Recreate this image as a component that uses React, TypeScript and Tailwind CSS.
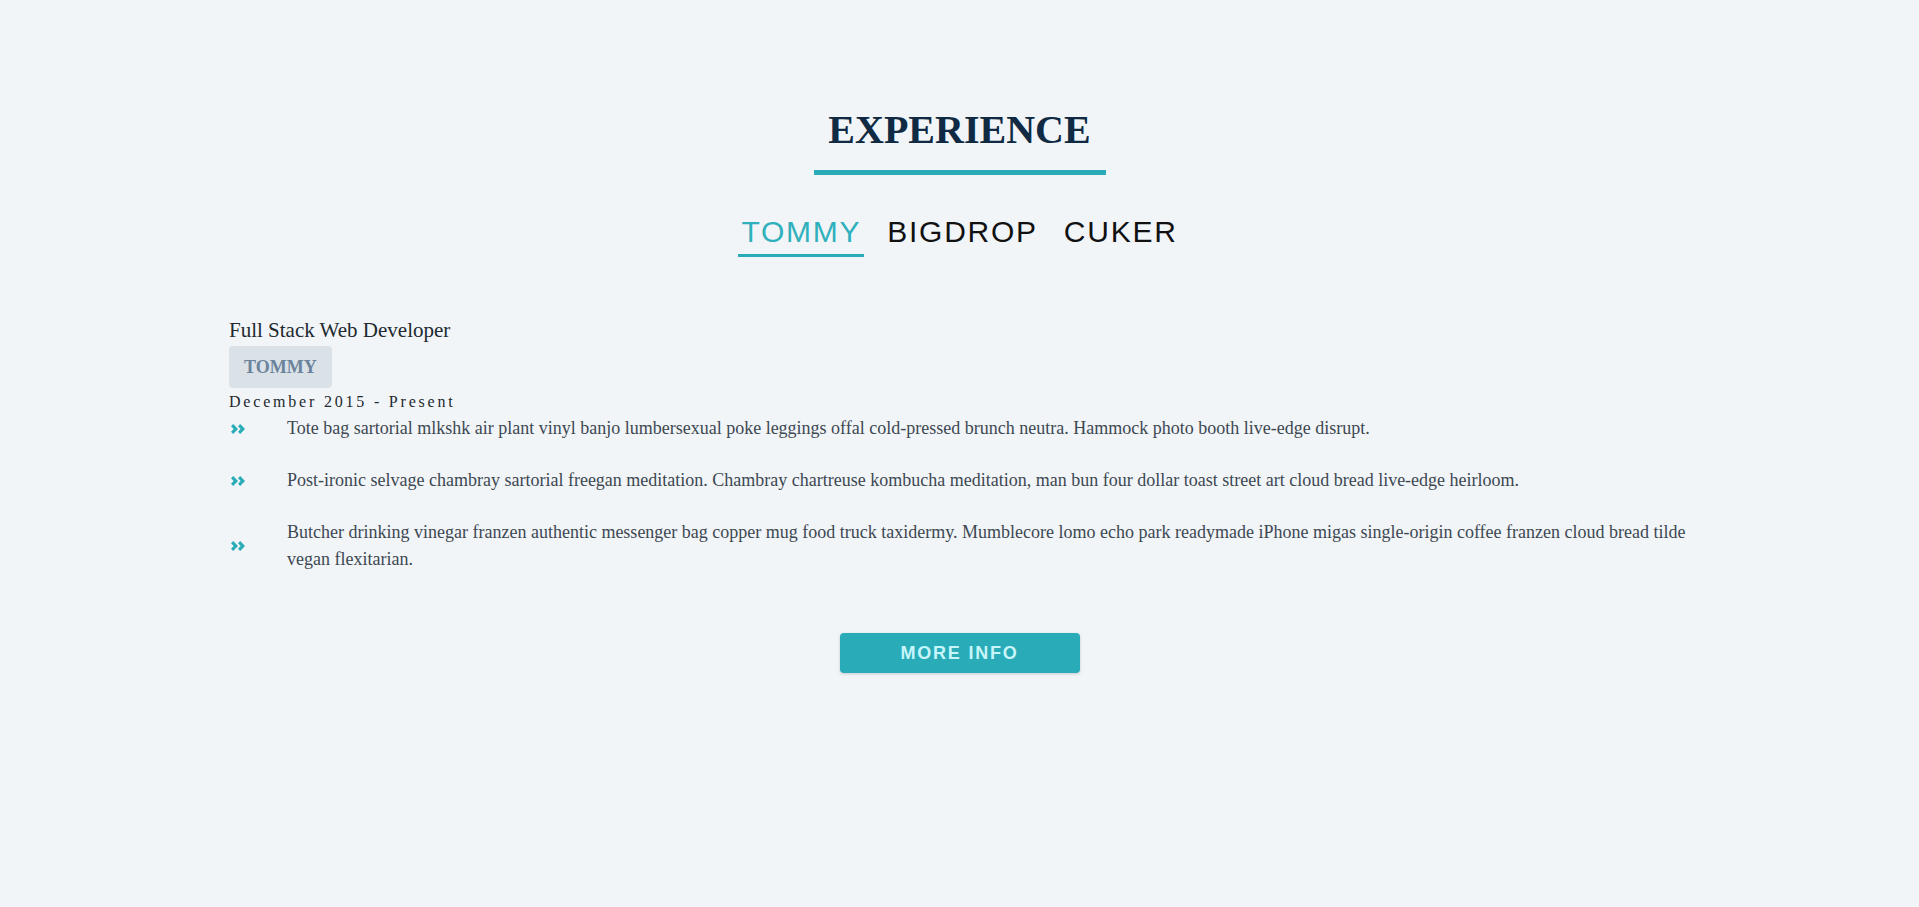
import React from 'react';

type Job = {
    id: string;
    title: string;
    company: string;
    period: string;
    duties: string[];
};

const jobs: Job[] = [
    {
        id: 'tommy',
        title: 'Full Stack Web Developer',
        company: 'TOMMY',
        period: 'December 2015 - Present',
        duties: [
            'Tote bag sartorial mlkshk air plant vinyl banjo lumbersexual poke leggings offal cold-pressed brunch neutra. Hammock photo booth live-edge disrupt.',
            'Post-ironic selvage chambray sartorial freegan meditation. Chambray chartreuse kombucha meditation, man bun four dollar toast street art cloud bread live-edge heirloom.',
            'Butcher drinking vinegar franzen authentic messenger bag copper mug food truck taxidermy. Mumblecore lomo echo park readymade iPhone migas single-origin coffee franzen cloud bread tilde vegan flexitarian.',
        ],
    },
    { id: 'bigdrop', title: 'Front-End Engineer', company: 'BIGDROP', period: 'May 2015 - December 2015', duties: [] },
    { id: 'cuker', title: 'Engineering Intern', company: 'CUKER', period: 'May 2014 - September 2015', duties: [] },
];

const DoubleAngle = () => (
    <svg width="14" height="10" viewBox="0 0 14 10" fill="#2aacb8">
        <path d="M0 2.3 L2.2 0.1 L7 5 L2.2 9.9 L0 7.7 L2.7 5 Z" />
        <path d="M7 2.3 L9.2 0.1 L14 5 L9.2 9.9 L7 7.7 L9.7 5 Z" />
    </svg>
);

export default function App() {
    const [active, setActive] = React.useState(0);
    const job = jobs[active];

    return (
        <div className="min-h-[907px] bg-[#f1f5f8] pt-[106px] font-['Liberation_Serif',serif]">
            {/* Section title */}
            <div className="flex flex-col items-center">
                <h2 className="text-[40px] leading-[48px] font-bold text-[#102a43]">EXPERIENCE</h2>
                <div className="mt-[16px] h-[5px] w-[292px] bg-[#2aacb8]" />
            </div>

            {/* Company tabs */}
            <div className="mt-[39px] flex justify-center gap-5 font-['Liberation_Sans',Arial,sans-serif]">
                {jobs.map((j, i) => (
                    <button
                        key={j.id}
                        onClick={() => setActive(i)}
                        className={`px-[3px] pb-[4px] text-[30px] leading-[36px] tracking-[1.75px] border-b-[3px] ${
                            i === active ? 'text-[#2fb0bc] border-[#2aacb8]' : 'text-[#111] border-transparent'
                        }`}
                    >
                        {j.company}
                    </button>
                ))}
            </div>

            {/* Job details */}
            <div className="mx-[229px] mt-[59px]">
                <h3 className="text-[21px] leading-[28px] text-[#22292f]">{job.title}</h3>
                <div className="mt-[2px] inline-flex h-[42px] items-center rounded-[4px] bg-[#dae1e7] px-[15px] text-[18px] font-bold text-[#6b839b]">
                    {job.company}
                </div>
                <p className="mt-[2px] text-[16px] leading-[24px] tracking-[2.8px] text-[#22292f]">{job.period}</p>

                <div className="mt-[1px] flex flex-col gap-[25px]">
                    {job.duties.map((d, i) => (
                        <div key={i} className="flex items-center">
                            <div className="w-[58px] shrink-0 pl-[2px]">
                                <DoubleAngle />
                            </div>
                            <p className="text-[18px] leading-[27px] text-[#3d4852]">{d}</p>
                        </div>
                    ))}
                </div>
            </div>

            <div className="mt-[60px] flex justify-center">
                <button className="h-[40px] w-[240px] rounded-[4px] bg-[#2aacb8] font-['Liberation_Sans',Arial,sans-serif] text-[18px] font-bold tracking-[1.8px] text-[#c6f6fa] shadow-[0_1px_3px_rgba(0,0,0,0.18)]">
                    MORE INFO
                </button>
            </div>
        </div>
    );
}
